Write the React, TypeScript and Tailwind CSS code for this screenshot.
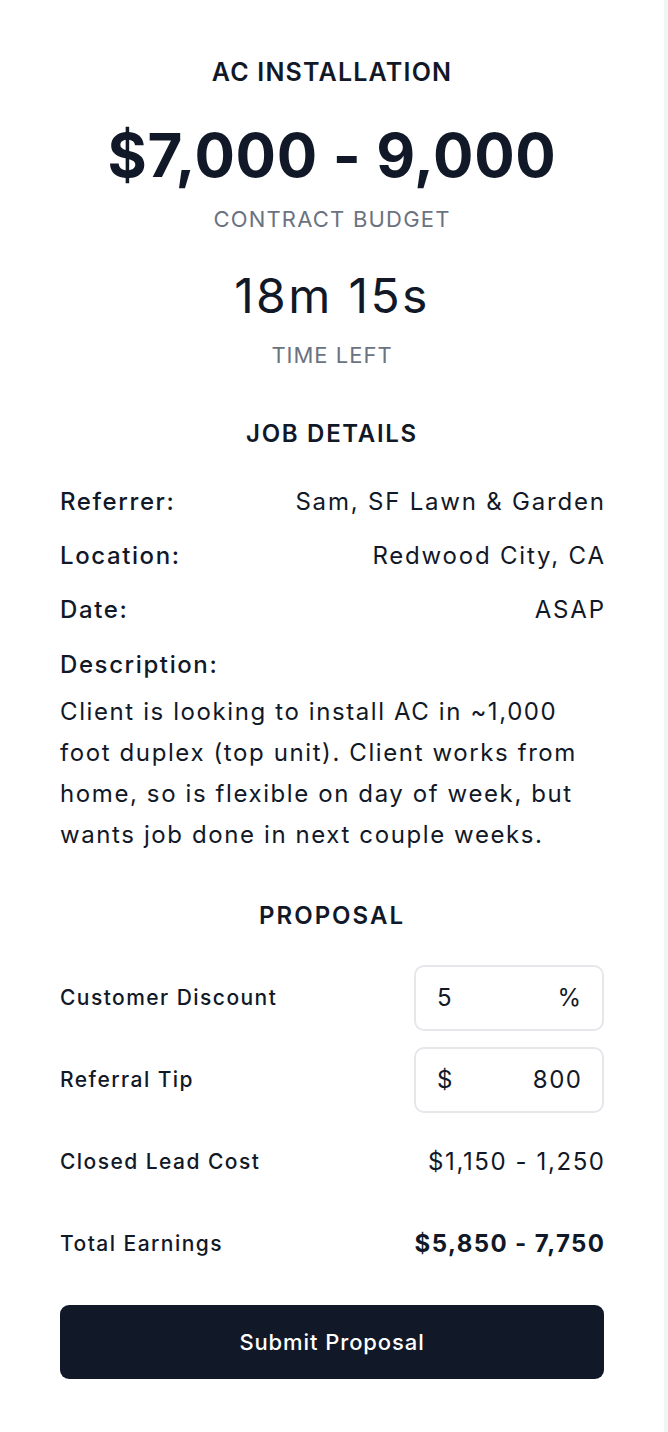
import React from 'react'

const details = [
  { label: 'Referrer:', value: 'Sam, SF Lawn & Garden' },
  { label: 'Location:', value: 'Redwood City, CA' },
  { label: 'Date:', value: 'ASAP' },
]

const InputBox = ({ left, right }: { left: string; right: string }) => (
  <div className="flex h-[66px] w-[190px] items-center justify-between rounded-[10px] border-2 border-[#e5e7eb] px-[21px] text-[24px] tracking-[1.5px]">
    <span>{left}</span>
    <span className="mr-[-1.5px]">{right}</span>
  </div>
)

const ProposalRow = ({
  label,
  children,
}: {
  label: string
  children: React.ReactNode
}) => (
  <div className="flex h-[66px] items-center justify-between">
    <span className="text-[21px] font-medium tracking-[1.45px]">{label}</span>
    {children}
  </div>
)

export default function App() {
  return (
    <div className="flex min-h-screen bg-white font-['Inter',sans-serif] text-[#111827]">
      <main className="flex flex-1 flex-col px-[60px] pt-[56px] pb-[54px]">
        <div className="flex flex-col items-center text-center">
          <h1 className="text-[25px] font-semibold leading-[32px] tracking-[1.2px]">AC INSTALLATION</h1>
          <div className="mt-[31px] text-[60px] font-bold leading-[72px] tracking-[0.65px]">$7,000 - 9,000</div>
          <div className="mt-[14px] text-[22px] leading-[28px] tracking-[1.2px] text-[#6b7280]">CONTRACT BUDGET</div>
          <div className="mt-[35px] text-[48px] leading-[56px] tracking-[2.4px]">18m 15s</div>
          <div className="mt-[17px] text-[22px] leading-[28px] tracking-[1px] text-[#6b7280]">TIME LEFT</div>
          <h2 className="mt-[49px] text-[24px] font-semibold leading-[32px] tracking-[1.7px]">JOB DETAILS</h2>
        </div>

        <div className="mt-[36px] flex flex-col gap-[22px] text-[24px] leading-[32px] tracking-[1.6px]">
          {details.map((d) => (
            <div key={d.label} className="flex justify-between">
              <span className="font-medium">{d.label}</span>
              <span className="mr-[-1.8px] tracking-[1.8px]">{d.value}</span>
            </div>
          ))}
          <div className="mt-[1px] flex flex-col">
            <span className="font-medium">Description:</span>
            <p className="mt-[10px] leading-[41px]">
              Client is looking to install AC in ~1,000
              <br />
              foot duplex (top unit). Client works from
              <br />
              home, so is flexible on day of week, but
              <br />
              wants job done in next couple weeks.
            </p>
          </div>
        </div>

        <h2 className="mt-[45px] text-center text-[24px] font-semibold leading-[32px] tracking-[2px]">PROPOSAL</h2>

        <div className="mt-[33px] flex flex-col gap-[16px]">
          <ProposalRow label="Customer Discount">
            <InputBox left="5" right="%" />
          </ProposalRow>
          <ProposalRow label="Referral Tip">
            <InputBox left="$" right="800" />
          </ProposalRow>
          <ProposalRow label="Closed Lead Cost">
            <span className="mr-[-1.6px] text-[24px] tracking-[1.6px]">$1,150 - 1,250</span>
          </ProposalRow>
          <ProposalRow label="Total Earnings">
            <span className="mr-[-1.4px] text-[24px] font-bold tracking-[1.4px]">$5,850 - 7,750</span>
          </ProposalRow>
        </div>

        <button className="mt-[28px] h-[74px] w-full rounded-[9px] bg-[#111827] text-[22px] font-medium tracking-[0.9px] text-white">
          Submit Proposal
        </button>
      </main>
      <div className="w-[4px] bg-[#f3f4f6]" />
    </div>
  )
}
